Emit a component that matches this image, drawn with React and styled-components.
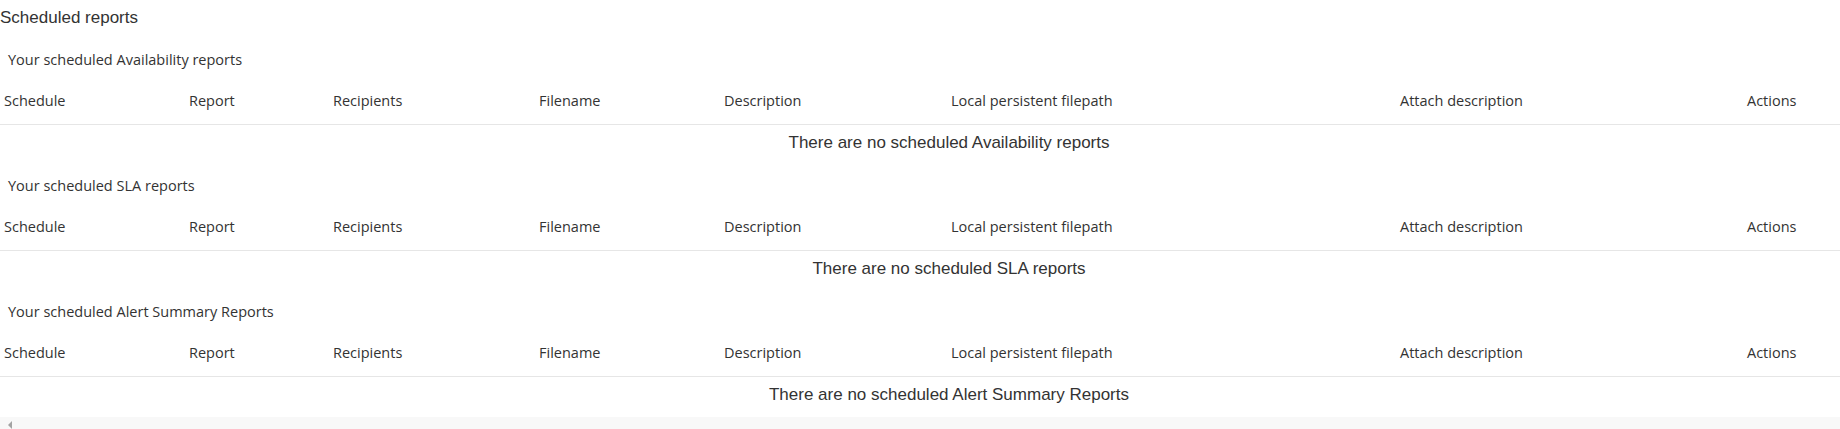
import React from 'react';
import styled, { createGlobalStyle } from 'styled-components';

const GlobalStyle = createGlobalStyle`
  html, body {
    margin: 0;
    padding: 0;
    background: #fff;
  }
  body {
    font-family: "Liberation Sans", Arial, sans-serif;
    color: #333;
    overflow: hidden;
  }
`;

const Page = styled.div`
  width: 1840px;
  height: 429px;
  display: flex;
  flex-direction: column;
  position: relative;
  overflow: hidden;
`;

const Title = styled.h1`
  margin: 0;
  font-family: "Liberation Sans", Arial, sans-serif;
  font-weight: normal;
  font-size: 17px;
  line-height: 36px;
  height: 36px;
  color: #333;
`;

const Section = styled.section`
  display: flex;
  flex-direction: column;
`;

const Subtitle = styled.div`
  margin-top: 14px;
  padding-left: 8px;
  font-family: "Open Sans", sans-serif;
  font-size: 14.5px;
  line-height: 20px;
  color: #333;
`;

const Table = styled.table`
  width: 1898px;
  flex-shrink: 0;
  border-collapse: collapse;
  table-layout: fixed;
`;

const Th = styled.th`
  text-align: left;
  font-family: "Open Sans", sans-serif;
  font-weight: normal;
  font-size: 14.5px;
  line-height: 20px;
  color: #333;
  padding: 21px 4px 13px;
  border-bottom: 1px solid #e6e6e6;
  white-space: nowrap;
`;

const Empty = styled.td`
  text-align: center;
  font-family: "Liberation Sans", Arial, sans-serif;
  font-size: 17px;
  line-height: 20px;
  color: #333;
  padding: 8px 0 9px;
`;

const ScrollBar = styled.div`
  position: absolute;
  left: 0;
  right: 0;
  bottom: 0;
  height: 12px;
  background: #f8f8f8;
`;

const Arrow = styled.span`
  position: absolute;
  left: 8px;
  top: 4px;
  width: 0;
  height: 0;
  border-top: 4px solid transparent;
  border-bottom: 4px solid transparent;
  border-right: 4px solid #a3a3a3;
`;

const columns = [
  { label: 'Schedule', width: 185 },
  { label: 'Report', width: 144 },
  { label: 'Recipients', width: 206 },
  { label: 'Filename', width: 185 },
  { label: 'Description', width: 227 },
  { label: 'Local persistent filepath', width: 449 },
  { label: 'Attach description', width: 347 },
  { label: 'Actions', width: 155 },
];

const sections = [
  { title: 'Your scheduled Availability reports', empty: 'There are no scheduled Availability reports' },
  { title: 'Your scheduled SLA reports', empty: 'There are no scheduled SLA reports' },
  { title: 'Your scheduled Alert Summary Reports', empty: 'There are no scheduled Alert Summary Reports' },
];

function App() {
  return (
    <>
      <GlobalStyle />
      <Page>
        <Title>Scheduled reports</Title>
        {sections.map(s => (
          <Section key={s.title}>
            <Subtitle>{s.title}</Subtitle>
            <Table>
              <colgroup>
                {columns.map(c => <col key={c.label} style={{ width: c.width }} />)}
              </colgroup>
              <thead>
                <tr>
                  {columns.map(c => <Th key={c.label}>{c.label}</Th>)}
                </tr>
              </thead>
              <tbody>
                <tr>
                  <Empty colSpan={columns.length}>{s.empty}</Empty>
                </tr>
              </tbody>
            </Table>
          </Section>
        ))}
        <ScrollBar>
          <Arrow />
        </ScrollBar>
      </Page>
    </>
  );
}

export default App;
